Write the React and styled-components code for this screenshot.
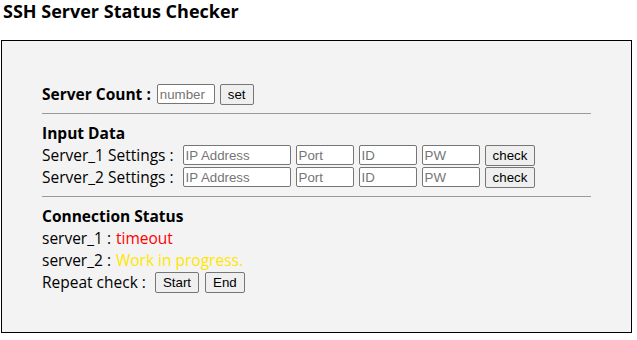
import React from 'react'
import styled, { createGlobalStyle } from 'styled-components'

const GlobalStyle = createGlobalStyle`
  body {
    margin: 0;
    background: #fff;
    font-family: "Open Sans", "Noto Sans", sans-serif;
    color: #000;
  }
`

const Page = styled.div`
  padding: 0 5px 0 1px;
`

const Title = styled.h1`
  margin: 0;
  padding: 0 0 0 2px;
  height: 40px;
  line-height: 22px;
  font-size: 18px;
  font-weight: 700;
`

const Panel = styled.div`
  border: 1px solid #000;
  background: #f3f3f3;
  padding: 42px 40px 39px 40px;
`

const Row = styled.div`
  display: flex;
  align-items: center;
  height: 22px;
  font-size: 15.5px;
  white-space: nowrap;
`

const Heading = styled.div`
  height: 22px;
  line-height: 22px;
  font-size: 15.5px;
  font-weight: 700;
`

const Label = styled.span`
  font-weight: ${({ bold }) => (bold ? 700 : 400)};
  margin-right: ${({ bold }) => (bold ? 6 : 9)}px;
`

const Status = styled.span`
  color: ${({ color }) => color};
  margin-left: 5px;
`

const Field = styled.input`
  box-sizing: border-box;
  width: ${({ w }) => w}px;
  height: 20px;
  margin: 0 5px 0 0;
  padding: 1px 2px;
  border: 1px solid #767676;
  border-radius: 2px;
  background: #fff;
  font-family: "Liberation Sans", Arial, sans-serif;
  font-size: 13.3px;
  &::placeholder {
    color: #757575;
  }
`

const Button = styled.button`
  box-sizing: border-box;
  height: 21px;
  margin: 0 6px 0 0;
  padding: 0 7px;
  border: 1px solid #767676;
  border-radius: 2px;
  background: #efefef;
  font-family: "Liberation Sans", Arial, sans-serif;
  font-size: 13.3px;
  color: #000;
`

const Rule = styled.hr`
  margin: 8px 0;
  border: 0;
  border-top: 1px solid #9a9a9a;
  height: 0;
`

const servers = ['Server_1', 'Server_2']

const App = () => {
  return (
    <Page>
      <GlobalStyle />
      <Title>SSH Server Status Checker</Title>
      <Panel>
        <Row>
          <Label bold>Server Count :</Label>
          <Field w={58} placeholder="number" />
          <Button>set</Button>
        </Row>
        <Rule />
        <Heading>Input Data</Heading>
        {servers.map((s) => (
          <Row key={s}>
            <Label>{s} Settings :</Label>
            <Field w={108} placeholder="IP Address" />
            <Field w={58} placeholder="Port" />
            <Field w={58} placeholder="ID" />
            <Field w={58} placeholder="PW" />
            <Button>check</Button>
          </Row>
        ))}
        <Rule />
        <Heading>Connection Status</Heading>
        <Row>
          server_1 :<Status color="#ff0000">timeout</Status>
        </Row>
        <Row>
          server_2 :<Status color="#ffe600">Work in progress.</Status>
        </Row>
        <Row>
          <Label>Repeat check :</Label>
          <Button>Start</Button>
          <Button>End</Button>
        </Row>
      </Panel>
    </Page>
  )
}

export default App
